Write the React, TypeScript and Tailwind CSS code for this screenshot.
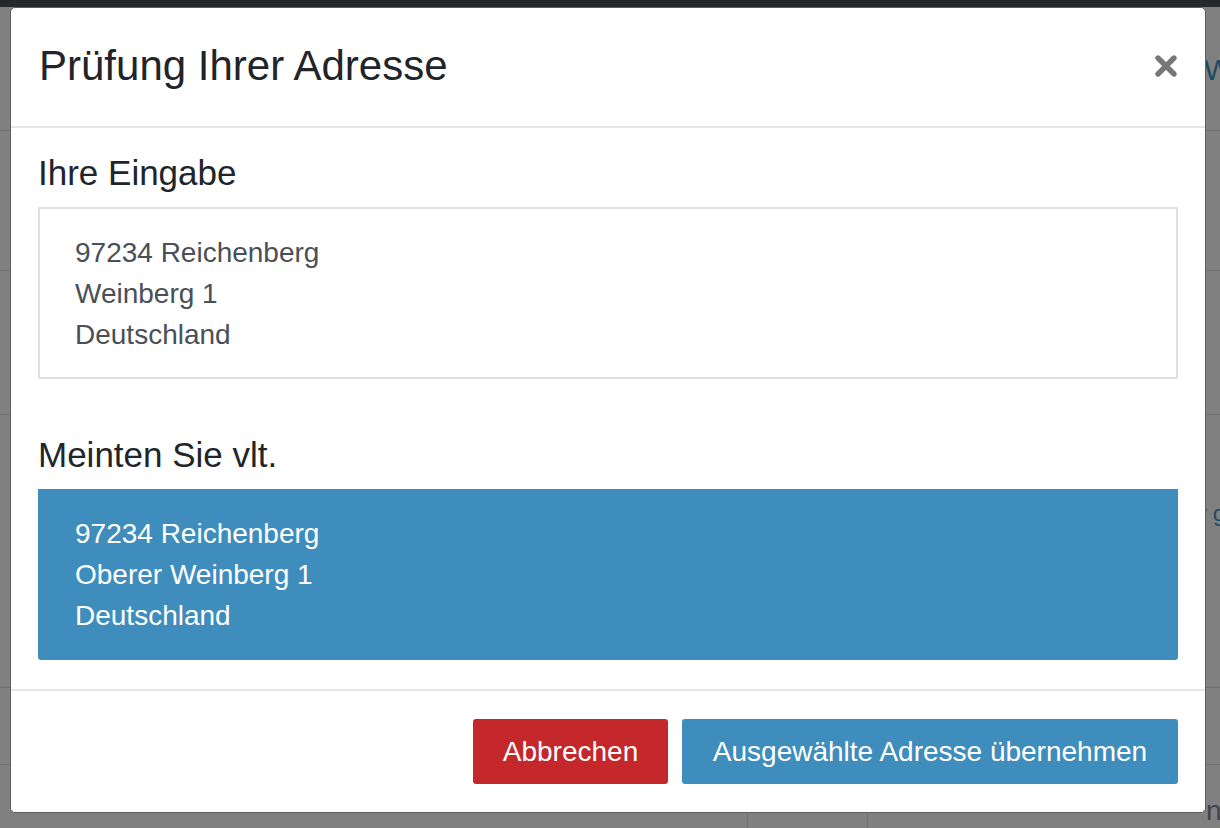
import { X } from 'lucide-react';

const font = { fontFamily: '"Liberation Sans", Arial, sans-serif' };

function AddressLines({ lines }: { lines: string[] }) {
  return (
    <>
      {lines.map((line) => (
        <div key={line}>{line}</div>
      ))}
    </>
  );
}

// Page content behind the backdrop, dimmed
function Backdrop() {
  return (
    <div className="flex flex-col h-full bg-[#808080] text-[#1e4a66]">
      <div className="h-[7px] shrink-0 bg-[#25282b]" />
      <div className="h-[124px] shrink-0 border-b border-[#6f6f6f] flex justify-end items-center pt-[2px]">
        <span className="text-[30px] w-[16px] overflow-hidden whitespace-nowrap">W</span>
      </div>
      <div className="h-[140px] shrink-0 border-b border-[#6f6f6f]" />
      <div className="h-[144px] shrink-0 border-b border-[#6f6f6f]" />
      <div className="h-[273px] shrink-0 border-b border-[#6f6f6f] flex justify-end pt-[82px]">
        <span className="text-[22px] w-[24px] overflow-hidden whitespace-nowrap">y g</span>
      </div>
      <div className="h-[77px] shrink-0 border-b border-[#6f6f6f]" />
      <div className="flex-1 flex">
        <div className="w-[748px] border-r border-[#6f6f6f]" />
        <div className="w-[120px] border-r border-[#6f6f6f]" />
        <div className="flex-1 flex justify-end items-end">
          <span className="text-[28px] text-[#444] w-[14px] overflow-hidden leading-[34px]">n</span>
        </div>
      </div>
    </div>
  );
}

export default function App() {
  return (
    <div className="relative w-[1220px] h-[828px] overflow-hidden" style={font}>
      <Backdrop />

      <div className="absolute inset-0 pl-[10px] pt-[7px]">
        <div className="w-[1196px] rounded-[5px] border border-[#5f5f5f] bg-white">
          {/* header */}
          <div className="flex items-center justify-between h-[120px] border-b-2 border-[#e3e6ea] pl-[28px] pr-[28px] pb-[3px]">
            <h1 className="text-[42px] text-[#212529] leading-none">Prüfung Ihrer Adresse</h1>
            <X className="w-[32px] h-[32px] text-[#777] -mr-[5px]" strokeWidth={4} />
          </div>

          {/* body */}
          <div className="px-[27px] pt-[25px] pb-[29px]">
            <h2 className="text-[35px] leading-[40px] text-[#212529]">Ihre Eingabe</h2>
            <div className="mt-[14px] h-[172px] border-2 border-[#e0e0e0] px-[35px] pt-[23px] text-[28px] leading-[41px] text-[#495057]">
              <AddressLines lines={['97234 Reichenberg', 'Weinberg 1', 'Deutschland']} />
            </div>

            <h2 className="mt-[56px] text-[35px] leading-[40px] text-[#212529]">Meinten Sie vlt.</h2>
            <div className="mt-[14px] h-[171px] rounded-b-[3px] bg-[#3f8dbd] px-[37px] pt-[24px] text-[28px] leading-[41px] text-white">
              <AddressLines lines={['97234 Reichenberg', 'Oberer Weinberg 1', 'Deutschland']} />
            </div>
          </div>

          {/* footer */}
          <div className="flex justify-end gap-[14px] border-t-2 border-[#e3e6ea] px-[27px] pt-[28px] pb-[28px]">
            <button className="h-[65px] w-[195px] rounded-[3px] bg-[#c4282a] text-[28px] text-white">
              Abbrechen
            </button>
            <button className="h-[65px] w-[496px] rounded-[3px] bg-[#3f8dbd] text-[28px] text-white">
              Ausgewählte Adresse übernehmen
            </button>
          </div>
        </div>
      </div>
    </div>
  );
}
